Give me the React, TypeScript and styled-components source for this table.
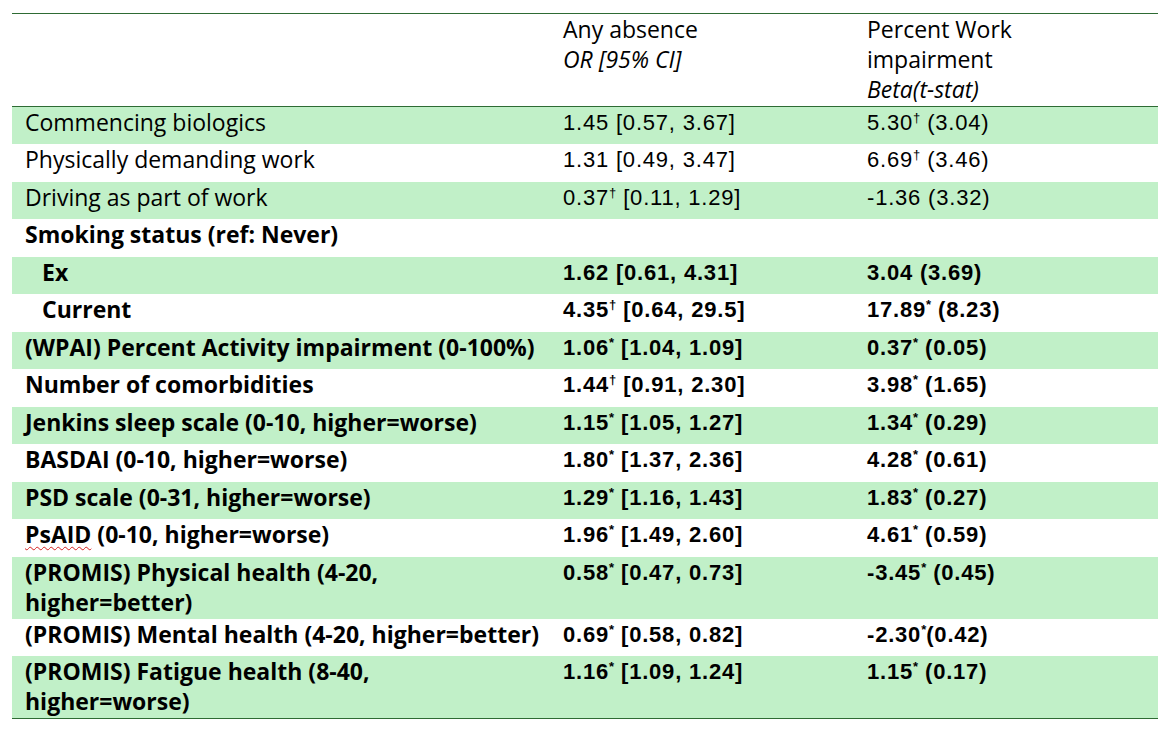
import styled, { createGlobalStyle } from "styled-components";

const GlobalStyle = createGlobalStyle`
  body {
    margin: 0;
    background: #ffffff;
    color: #000000;
  }
`;

const Page = styled.div`
  padding: 13px 0 0 12px;
`;

const Table = styled.table`
  width: 1146px;
  border-collapse: collapse;
  table-layout: fixed;
  border-top: 1px solid #2e6b34;
  border-bottom: 1px solid #2e6b34;
`;

const HeadRow = styled.tr`
  height: 93px;
  border-bottom: 1px solid #2e6b34;
`;

const HeadCell = styled.th`
  padding: 0 13px;
  vertical-align: top;
  text-align: left;
  font-family: "Open Sans", sans-serif;
  font-size: 23px;
  font-weight: 400;
  line-height: 30px;
`;

const Sub = styled.span`
  font-style: italic;
`;

const Row = styled.tr<{ $shade?: boolean; $tall?: boolean }>`
  height: ${(p) => (p.$tall ? "62px" : "37.5px")};
  background: ${(p) => (p.$shade ? "#c1f0c8" : "transparent")};
`;

const LabelCell = styled.td<{ $bold?: boolean; $indent?: boolean }>`
  padding: 0 13px 0 ${(p) => (p.$indent ? "30px" : "13px")};
  vertical-align: top;
  font-family: "Open Sans", sans-serif;
  font-size: 23px;
  font-weight: ${(p) => (p.$bold ? 700 : 400)};
  line-height: 30px;
  white-space: nowrap;
`;

const ValueCell = styled.td<{ $bold?: boolean }>`
  padding: 1px 13px 0;
  vertical-align: top;
  font-family: "Liberation Sans", Arial, sans-serif;
  font-size: 22px;
  letter-spacing: 0.8px;
  font-weight: ${(p) => (p.$bold ? 700 : 400)};
  line-height: 30px;
  white-space: nowrap;
`;

const Sup = styled.sup`
  font-size: 13px;
  line-height: 0;
  vertical-align: 8px;
  letter-spacing: 0;
`;

const Squiggle = styled.span`
  text-decoration: underline wavy #d42020;
  text-decoration-thickness: 1px;
  text-underline-offset: 3px;
`;

type Mark = "" | "†" | "*";

interface Entry {
  label: React.ReactNode;
  or: [string, Mark, string];
  beta: [string, Mark, string];
  bold?: boolean;
  indent?: boolean;
  tall?: boolean;
}

const rows: Entry[] = [
  { label: "Commencing biologics", or: ["1.45", "", " [0.57, 3.67]"], beta: ["5.30", "†", " (3.04)"] },
  { label: "Physically demanding work", or: ["1.31", "", " [0.49, 3.47]"], beta: ["6.69", "†", " (3.46)"] },
  { label: "Driving as part of work", or: ["0.37", "†", " [0.11, 1.29]"], beta: ["-1.36", "", " (3.32)"] },
  { label: "Smoking status (ref: Never)", or: ["", "", ""], beta: ["", "", ""], bold: true },
  { label: "Ex", or: ["1.62", "", " [0.61, 4.31]"], beta: ["3.04", "", " (3.69)"], bold: true, indent: true },
  { label: "Current", or: ["4.35", "†", " [0.64, 29.5]"], beta: ["17.89", "*", " (8.23)"], bold: true, indent: true },
  { label: "(WPAI) Percent Activity impairment (0-100%)", or: ["1.06", "*", " [1.04, 1.09]"], beta: ["0.37", "*", " (0.05)"], bold: true },
  { label: "Number of comorbidities", or: ["1.44", "†", " [0.91, 2.30]"], beta: ["3.98", "*", " (1.65)"], bold: true },
  { label: "Jenkins sleep scale (0-10, higher=worse)", or: ["1.15", "*", " [1.05, 1.27]"], beta: ["1.34", "*", " (0.29)"], bold: true },
  { label: "BASDAI (0-10, higher=worse)", or: ["1.80", "*", " [1.37, 2.36]"], beta: ["4.28", "*", " (0.61)"], bold: true },
  { label: "PSD scale (0-31, higher=worse)", or: ["1.29", "*", " [1.16, 1.43]"], beta: ["1.83", "*", " (0.27)"], bold: true },
  {
    label: (
      <>
        <Squiggle>PsAID</Squiggle> (0-10, higher=worse)
      </>
    ),
    or: ["1.96", "*", " [1.49, 2.60]"],
    beta: ["4.61", "*", " (0.59)"],
    bold: true,
  },
  {
    label: (
      <>
        (PROMIS) Physical health (4-20,
        <br />
        higher=better)
      </>
    ),
    or: ["0.58", "*", " [0.47, 0.73]"],
    beta: ["-3.45", "*", " (0.45)"],
    bold: true,
    tall: true,
  },
  { label: "(PROMIS) Mental health (4-20, higher=better)", or: ["0.69", "*", " [0.58, 0.82]"], beta: ["-2.30", "*", "(0.42)"], bold: true },
  {
    label: (
      <>
        (PROMIS) Fatigue health (8-40,
        <br />
        higher=worse)
      </>
    ),
    or: ["1.16", "*", " [1.09, 1.24]"],
    beta: ["1.15", "*", " (0.17)"],
    bold: true,
    tall: true,
  },
];

const Value = ({ parts }: { parts: [string, Mark, string] }) => (
  <>
    {parts[0]}
    {parts[1] && <Sup>{parts[1]}</Sup>}
    {parts[2]}
  </>
);

const App = () => {
  return (
    <Page>
      <GlobalStyle />
      <Table>
        <colgroup>
          <col style={{ width: 538 }} />
          <col style={{ width: 304 }} />
          <col style={{ width: 304 }} />
        </colgroup>
        <thead>
          <HeadRow>
            <HeadCell />
            <HeadCell>
              Any absence
              <br />
              <Sub>OR [95% CI]</Sub>
            </HeadCell>
            <HeadCell>
              Percent Work
              <br />
              impairment
              <br />
              <Sub>Beta(t-stat)</Sub>
            </HeadCell>
          </HeadRow>
        </thead>
        <tbody>
          {rows.map((r, i) => (
            <Row key={i} $shade={i % 2 === 0} $tall={r.tall}>
              <LabelCell $bold={r.bold} $indent={r.indent}>
                {r.label}
              </LabelCell>
              <ValueCell $bold={r.bold}>
                <Value parts={r.or} />
              </ValueCell>
              <ValueCell $bold={r.bold}>
                <Value parts={r.beta} />
              </ValueCell>
            </Row>
          ))}
        </tbody>
      </Table>
    </Page>
  );
};

export default App;
